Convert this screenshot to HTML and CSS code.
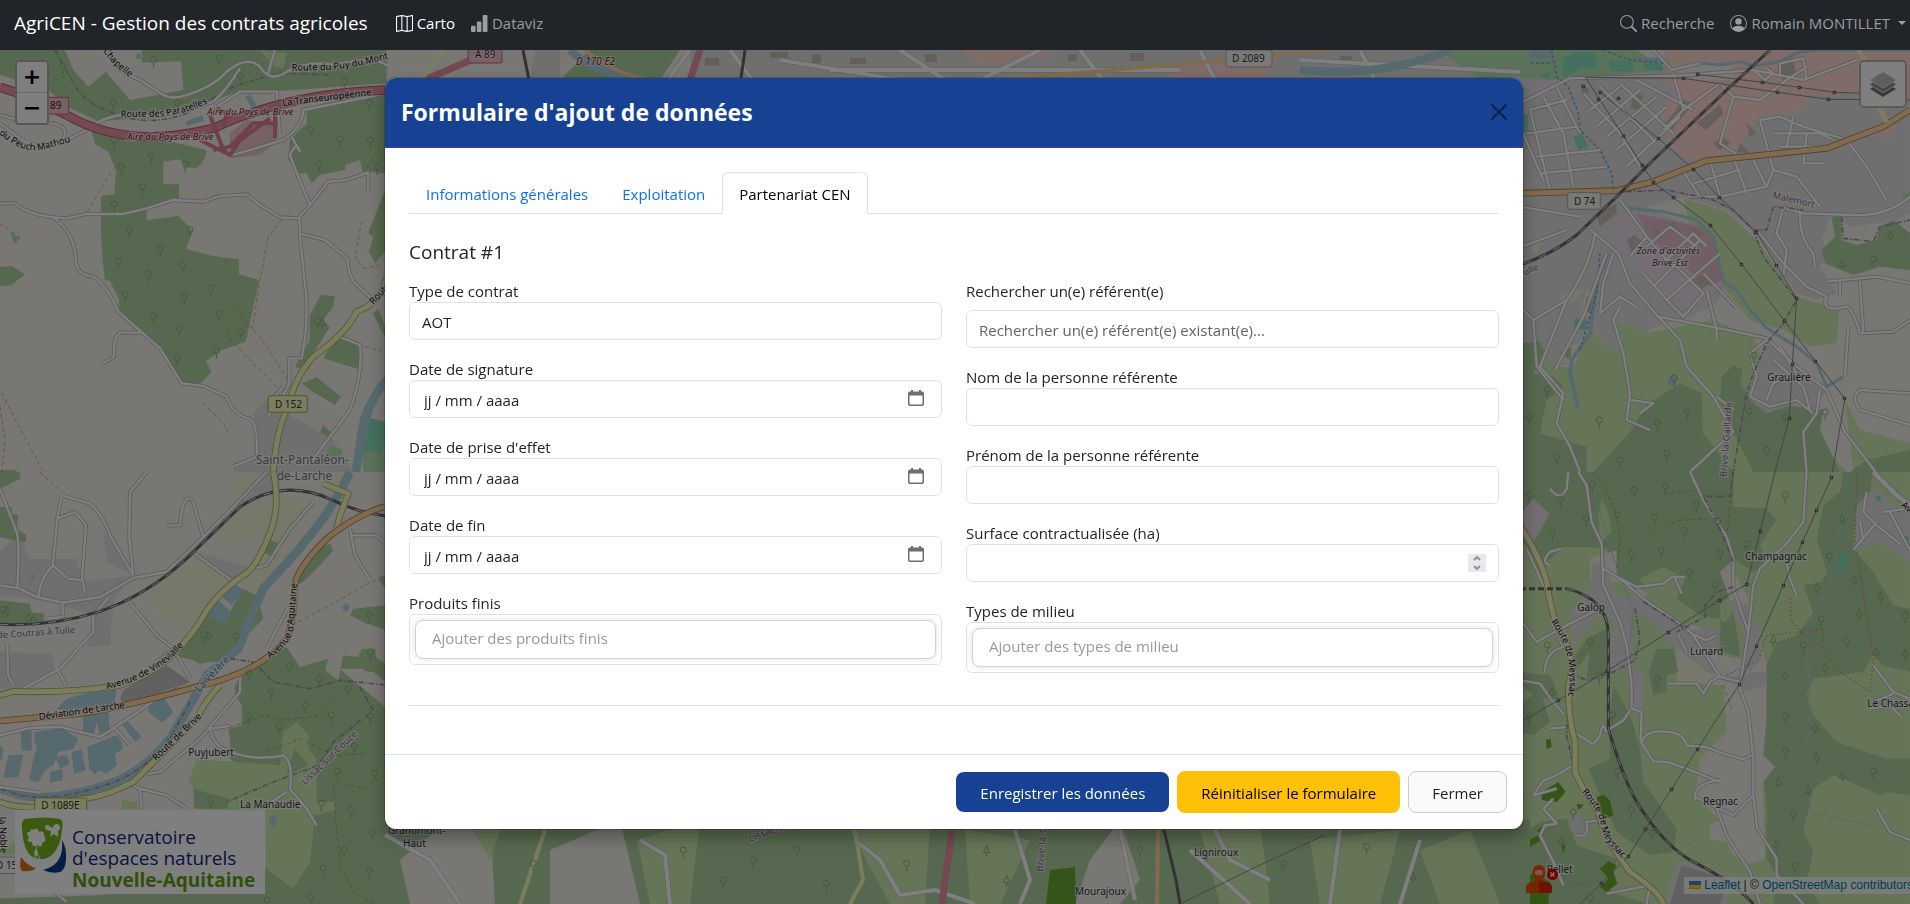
FILE: index.html
```html
<!DOCTYPE html>
<html lang="fr">
<head>
<meta charset="utf-8">
<meta name="viewport" content="width=device-width, initial-scale=1">
<title>AgriCEN - Gestion des contrats agricoles</title>
<link rel="stylesheet" href="styles.css">
</head>
<body>
<nav class="navbar">
  <a class="brand" href="#">AgriCEN - Gestion des contrats agricoles</a>
  <a class="nav-link active" href="#">
    <svg class="icon" viewBox="0 0 16 16" fill="currentColor" aria-hidden="true"><path fill-rule="evenodd" d="M15.817.113A.5.5 0 0 1 16 .5v14a.5.5 0 0 1-.402.49l-5 1a.502.502 0 0 1-.196 0L5.500 15.010l-4.902.98A.5.5 0 0 1 0 15.500v-14a.5.5 0 0 1 .402-.49l5-1a.5.5 0 0 1 .196 0L10.500.990l4.902-.98a.5.5 0 0 1 .415.103zM10 1.910l-4-.8v12.980l4 .8V1.910zm1 12.980 4-.8V1.110l-4 .8v12.980zm-6-.8V1.110l-4 .8v12.980l4-.8z"/></svg>
    Carto</a>
  <a class="nav-link" href="#">
    <svg class="icon" viewBox="0 0 16 16" fill="currentColor" aria-hidden="true"><rect y="10" width="4.300" height="6" rx="1"/><rect x="5.500" y="6" width="4.300" height="10" rx="1"/><rect x="11" y="0" width="4.500" height="16" rx="1"/></svg>
    Dataviz</a>
  <span class="spacer"></span>
  <a class="nav-link" href="#">
    <svg class="icon" viewBox="0 0 16 16" fill="none" stroke="currentColor" aria-hidden="true"><circle cx="6.500" cy="6.500" r="6"/><path d="M11.200 11.200l4 4" stroke-width="1.800" stroke-linecap="round"/></svg>
    Recherche</a>
  <a class="nav-link user" href="#">
    <svg class="icon" viewBox="0 0 16 16" fill="currentColor" aria-hidden="true"><path d="M11 6a3 3 0 1 1-6 0 3 3 0 0 1 6 0z"/><path fill-rule="evenodd" d="M0 8a8 8 0 1 1 16 0A8 8 0 0 1 0 8zm8-7a7 7 0 0 0-5.468 11.370C3.242 11.226 4.805 10 8 10s4.757 1.225 5.468 2.370A7 7 0 0 0 8 1z"/></svg>
    Romain MONTILLET<span class="caret"></span></a>
</nav>

<main class="map">
  <svg class="tiles" viewBox="0 0 1910 854" preserveAspectRatio="xMidYMid slice" aria-hidden="true">
    <defs>
      <g id="leaf"><circle r="9"/><path d="M0 9v16"/></g>
      <g id="pine"><path d="M0-14l-9 22h18zM0 8v12"/></g>
      <g id="nw-roads">
        <path d="M325 40Q350 95 420 120L490 165Q520 180 560 165Q640 140 680 95Q740 45 780 80Q810 130 860 95Q930 60 1010 75Q1130 40 1180 90M720 85Q680 150 640 185L560 210Q440 240 360 225Q300 235 270 265L180 310Q110 330 60 295L0 250"/>
        <path class="thin" d="M0 490H45Q90 530 200 535L260 522H370L440 505L520 480L610 485L660 468L740 463L780 495L840 532L895 535L930 495L985 425L1040 420L1105 397V455M160 532Q225 580 227 660Q230 705 280 710Q320 735 355 815L480 925L545 1030L610 1038L680 1070Q700 1125 745 1135Q775 1140 770 1250L700 1280M420 878H360Q340 890 342 950L310 970M930 495Q890 400 870 345Q890 300 900 335L875 290M898 535L902 610L918 760Q925 860 905 955H868V1030L848 1070M902 582L975 600L1042 655Q1045 710 1070 735L1120 780M1018 890L1080 915Q1090 1000 1050 1110L930 1270M808 1130V1090L850 1040M0 225Q80 250 150 250Q210 255 190 300M700 345L850 300Q910 260 910 210L1160 160M650 200L720 155L830 155L840 280M805 100Q815 60 825 30"/>
      </g>
      <g id="sw-roads">
        <path class="thin" d="M0 50L50 180Q60 220 52 345M185 70L172 140L158 280Q120 320 115 375M185 70L270 95Q310 130 330 190L400 310M172 140L225 120L258 160L246 320L255 360M158 280L205 320L250 325M0 340L60 350L110 375L190 392L300 375L400 318L500 300L610 195L700 105L800 0M385 385L470 490L520 530L570 620M325 378L280 430L280 480L180 590L70 650M188 395V435L140 440M440 0L390 60L388 200L400 310M585 245L695 325L760 290L800 280L870 170L940 90M610 195L580 90Q550 50 540 160L500 160M420 910L480 900L600 800L720 660V600M630 770Q640 820 680 835Q760 870 850 850Q880 870 870 950L920 1010L950 1060M630 770L690 762M0 790L90 768L180 765L300 795L400 730L470 680L560 640M390 935L420 950L425 1010M420 950L500 970L560 1010M800 530L870 395M1050 170L1065 250L1110 325M1050 190L1130 190L1170 230M100 1210L200 1290M22 520L24 610L40 640M170 590L198 640M860 960L800 1000M340 765L390 820M0 945L120 962"/>
      </g>
      <g id="ne-roads">
        <path d="M0 310L90 265L150 235L490 226L700 210L850 240L1010 180M400 150L455 210M455 210L540 190M212 690L295 760L330 850L415 950L600 985L740 1015L830 1100L920 1170L975 1296L1070 1420"/>
        <path class="thin" d="M0 620L180 650M5 740L140 690M0 380L70 540M30 330L90 570M70 290L130 400L160 560M110 260L180 400M30 330L140 300M20 400L170 380M50 470L240 450M60 520L260 500M190 280L300 400L360 500M240 260L400 420M300 250L460 400M350 240L520 330M210 330L300 260M230 380L360 270M260 410L410 290M290 450L440 320M320 500L480 350M460 220L490 330L430 390M490 330L600 250L640 290L720 300L800 240L860 200M640 290L600 430L660 470M700 210L735 240L760 220L740 205M780 230V190L850 175L860 240M720 360L780 350L850 380L980 420L1040 500L1100 600M720 360L760 510L740 560L600 590L500 590M760 400L900 400L940 420M820 350L800 440M860 400L850 490H910M780 440L930 440M760 510L830 530L900 620M480 500L540 590M570 480L600 590M640 470L680 580M520 550L660 510M700 480L740 560M710 690L790 790L860 860L920 890Q900 940 980 920Q1000 930 1020 1000L1120 995L1170 960M790 620L770 700L800 750L790 830M840 640Q840 720 880 760L885 800M1170 850L1070 830L920 845M960 845V890M1020 845L1030 1000M985 980L975 1130M1170 1180L1020 1170Q990 1190 1020 1230L1170 1275M740 1020L690 1060L710 1130L690 1190L750 1220L830 1200L880 1240M760 1080L850 1160L870 1230M780 1040L830 1120L760 1150L740 1200M900 1170L890 1240L850 1296L860 1420M415 950L480 1020L500 1100L580 1190L640 1296L510 1416M590 1190L640 1230M300 920L280 960L310 1060L330 1180L320 1260L390 1290M330 1200L400 1210L360 1240M225 700Q210 800 140 900L40 960M140 900L60 1100L130 1180L110 1270L150 1340L180 1416M280 760L250 850L240 940L300 890L350 920M370 820L440 900L490 950L550 880L450 780M330 770L380 710L330 640L300 600M380 710L440 780L520 700L560 740M400 860L540 720M440 900L600 760M380 740L450 680L530 740M550 820L650 925M780 620L850 640L1000 645Q1100 650 1170 590M0 920L40 960L50 1100L130 1200M260 760L190 950L105 1110M560 870L590 990V1020"/>
      </g>
      <g id="se-roads">
        <path class="thin" d="M175 0L200 40L215 150L245 215L250 340L300 450L320 520L335 640L335 710L365 720L362 810L400 868L440 870L500 890L600 930M510 0L550 85L620 195L640 260V350L685 480L665 610L660 650L685 720L700 860V970L712 1070L770 1160V1210L850 1296M860 0L850 150L800 215L720 290L700 340L685 480M365 810Q380 770 440 780Q490 780 500 820L560 825L610 845L670 862L695 850M250 290L300 320L350 345L430 335L455 315L495 315M465 318L485 365M300 320L370 380L500 470L520 490L600 615L660 630M445 635L530 635L550 665L570 630L600 612M475 490L500 540M515 485L560 505L590 490M800 270L810 320L830 370M0 625L60 635L100 690L130 725M90 770L145 765M330 715L310 745L270 770L258 780Q250 740 240 790Q215 830 210 810L160 780M0 440L50 510L130 465L240 410M75 600Q75 540 130 525L90 440M75 350L20 230M90 280Q60 270 90 240L125 230M160 880L100 915L70 925L40 970L110 950M100 980L70 1010L110 1055L75 1060L60 1090L100 1170L130 1240M600 925Q520 930 525 985M590 1010L620 1090L690 1200L720 1296M525 975L640 1030L700 970M1060 580L1120 660L1170 680M1050 710L1110 700L1145 735M1120 665L1060 690M1070 1010L1110 1080L1170 1105M1040 60L1030 120L1070 160L1140 215M1090 120L1160 110M1110 120L1170 235M1070 150L1000 235M1020 150L1030 200M170 1090Q210 1100 200 1050L240 1045L260 1090M90 50Q120 90 140 50L145 0M260 1265L390 1240L380 1296"/>
      </g>
      <path id="lbl-chapelle" d="M290 0Q335 90 430 132"/>
      <path id="lbl-mont" d="M875 92L985 90Q1080 82 1180 50"/>
      <path id="lbl-paratelles" d="M362 232L470 230Q560 225 640 180"/>
      <path id="lbl-mathou" d="M-20 265Q60 345 130 328L230 300"/>
      <path id="lbl-vinevialle" d="M320 652Q470 620 560 510"/>
      <path id="lbl-aquitaine" d="M810 560Q875 510 880 470L893 320"/>
      <path id="lbl-meyssac" d="M92 450Q165 540 145 670"/>
      <path id="lbl-meyssac2" d="M185 960Q240 1020 245 1070Q260 1120 330 1180"/>
    </defs>

    <rect class="land" width="1910" height="854"/>

    <!-- north-west -->
    <g transform="translate(0 -10) scale(.3333)">
      <path class="wood" d="M0 30H195L220 90L265 140L318 95L390 180L550 150L543 64L425 68V30H1160V140L920 205V250L870 300L865 360L900 400H920L935 430L960 405L1035 390L1160 400V130L880 150L700 160L560 215L400 235L300 245L200 200L145 150L0 105z"/>
      <path class="wood" d="M275 275L360 270L620 330Q620 360 590 385L555 380L540 358L490 365V433H537V475L510 480L440 508V540L535 528L578 572L557 627L640 648L717 658V702L778 720L737 905L665 930L618 963L635 997L600 1032L545 1030L480 925L357 815V780L330 722L315 720Q300 620 303 468L343 463L348 390L325 335L285 313z"/>
      <path class="wood" d="M0 680L35 678L75 703L35 735L0 738zM962 765L1005 768L1000 800L970 840L990 860L940 940L900 985L885 980L930 900L928 830zM1020 890L1075 915L1083 990L970 955L985 930zM905 1030L950 1012L1023 1070L1005 1095L930 1050zM1155 450L1105 578L1120 590L1107 635L1125 670L1160 630zM1118 820L1135 808L1160 870V900zM970 1155L992 1175L960 1235L938 1222zM0 1290H50V1296H0z"/>
      <path class="field" d="M1035 375L1080 360L1088 395L1038 395z"/>
      <path class="grass" d="M780 30L860 40L850 85L825 80z"/>
      <path class="town" d="M700 1296V1270L770 1250L760 1120L830 1050L860 1120L1000 1200L1060 1296z"/>
      <path class="sport" d="M1085 1130L1155 1150V1296H1090zM990 1215L1030 1230L1015 1255L975 1245z"/>
      <path class="pitch" d="M1110 1135L1155 1145V1205L1100 1200zM1095 1200L1150 1210L1145 1240L1090 1230z"/>
      <path class="water" d="M405 45L418 38L425 57L408 55zM555 245L608 225L612 242L562 258zM735 168L750 163L770 195L755 205zM30 576L60 595L42 613zM1160 1000Q1090 1080 1075 1160L1055 1296H1080L1105 1160Q1120 1090 1160 1040z"/>
      <path class="service" d="M690 280L740 240L830 250L825 310L780 345L690 355z"/>
      <path class="rail-dash" d="M165 30L215 120Q250 190 330 215Q440 265 560 220L700 140L830 100L1000 105"/>
      <path class="track" d="M140 125L200 110M360 365L330 400L260 520M845 540L805 590L780 720L757 870M690 795L780 890L870 1030M685 875L690 900L830 1040M1085 545L1065 650L1090 685L1140 675M1140 320L1095 395M1075 915L1155 935M5 1060L130 1296M0 1100L15 1200L5 1296M610 1090L670 1150L690 1190M0 550L70 600"/>
      <use href="#nw-roads" class="casing"/><use href="#nw-roads" class="street"/>
      <path class="sec-case" d="M1160 715Q1140 790 1070 815Q1040 880 940 950Q880 1020 870 1090Q830 1160 820 1296"/><path class="sec" d="M1160 715Q1140 790 1070 815Q1040 880 940 950Q880 1020 870 1090Q830 1160 820 1296"/>
      <path class="mot-case" d="M0 142Q80 165 200 225Q380 330 640 265Q860 160 1160 150"/><path class="mot" d="M0 142Q80 165 200 225Q380 330 640 265Q860 160 1160 150"/>
      <path class="ramp" d="M600 300L690 345M630 225L670 330L690 345L720 300L810 235M650 205L680 220L670 260M825 215V295M640 330L690 320L720 290L760 250L820 250"/>
      <rect class="shield mot-sh" x="95" y="172" width="111" height="50" rx="5"/><text x="150" y="208" class="sh-mot">89</text>
      <rect class="shield sec-sh" x="805" y="1067" width="117" height="50" rx="5"/><text x="825" y="1103" class="sh-sec">D 152</text>
      <g class="trees"><use href="#leaf" x="188" y="78"/><use href="#leaf" x="461" y="58"/><use href="#leaf" x="658" y="54"/><use href="#leaf" x="721" y="107"/><use href="#leaf" x="340" y="188"/><use href="#leaf" x="532" y="188"/><use href="#leaf" x="343" y="300"/><use href="#leaf" x="454" y="345"/><use href="#leaf" x="364" y="381"/><use href="#leaf" x="556" y="373"/><use href="#leaf" x="427" y="440"/><use href="#leaf" x="343" y="492"/><use href="#leaf" x="388" y="570"/><use href="#leaf" x="570" y="568"/><use href="#leaf" x="481" y="624"/><use href="#leaf" x="355" y="663"/><use href="#leaf" x="547" y="675"/><use href="#leaf" x="445" y="702"/><use href="#leaf" x="631" y="744"/><use href="#leaf" x="376" y="762"/><use href="#leaf" x="553" y="768"/><use href="#leaf" x="460" y="828"/><use href="#leaf" x="658" y="822"/><use href="#leaf" x="538" y="867"/><use href="#leaf" x="721" y="876"/><use href="#leaf" x="649" y="932"/><use href="#leaf" x="532" y="954"/><use href="#leaf" x="931" y="267"/><use href="#leaf" x="1021" y="297"/><use href="#leaf" x="1111" y="300"/><use href="#leaf" x="958" y="372"/><use href="#leaf" x="1132" y="380"/><use href="#leaf" x="1108" y="188"/><use href="#leaf" x="953" y="843"/><use href="#pine" x="967" y="846"/><use href="#leaf" x="1033" y="124"/></g>
      <g class="label road-l"><text><textPath href="#lbl-chapelle">La Chapelle</textPath></text><text><textPath href="#lbl-mont">Route du Puy du Mont</textPath></text><text><textPath href="#lbl-paratelles">Route des Paratelles</textPath></text><text><textPath href="#lbl-mathou">e du Peuch Mathou</textPath></text><text transform="translate(848 198) rotate(-7)">La Transeuropéenne</text><text transform="translate(1120 795) rotate(-48)">Route</text></g>
      <g class="label red"><text x="622" y="226">Aire du Pays de Brive</text><text x="382" y="300">Aire du Pays de Brive</text></g>
      <text class="label town-l" x="768" y="1272">Saint-Pantaléon-</text>
    </g>

    <!-- south-west -->
    <g transform="translate(0 422) scale(.3333)">
      <path class="town" d="M0 240L60 180L85 260L230 260L250 330L400 310L340 385L330 520L260 525L280 430L150 390L0 370zM310 190L345 190L350 230L395 290L400 310L320 270zM0 540L155 545L165 590L70 650L0 650zM590 240L760 290L690 330L640 290zM770 0H860L830 50L700 110z"/>
      <path class="farm" d="M440 365L585 245L690 330L600 450L560 470L480 430zM640 180L700 120L820 80L930 85L860 210L780 370L735 350L780 270L790 180L700 215zM700 20L800 0L740 80L700 70z"/>
      <path class="wood" d="M0 0H60V20L0 50zM0 105H35V125L55 130L50 170L78 188V210L40 205L0 195zM0 385L90 395L95 420L132 425V450L0 455zM730 350L770 370L790 440L730 500L700 560L600 575L580 565L500 545L450 575L530 520L600 450L620 410L680 440L700 400zM800 200L840 215L825 255L785 240zM880 350L900 310L960 225L990 215L1000 235L960 280L920 320zM1135 320L1170 300V370zM1155 400L1170 395V500L1150 470L1100 455L1050 430L1060 410z"/>
      <path class="wood" d="M860 525L900 585L985 560L975 595L1015 625L1030 550L1075 555L1085 530L1125 530L1130 560L1170 580V640L1120 600L1020 590L1060 620L1155 700L1170 700V1296H0V1280L300 1270L795 1200L800 1170L860 1160L840 980L690 860V800L685 770L725 760V700L705 665V640L730 610L770 575z"/>
      <path class="grass" d="M590 862L700 870L840 880L850 780L890 750L925 790V830L950 860V990L1005 990V1015L945 1030L930 1170L880 1250L800 1190L795 1010L700 1020L580 1005V950L565 930zM365 985L410 990L415 1012H365zM0 1130L45 1110V1150H0z"/>
      <path class="wood" d="M860 900L885 830L925 880L870 905zM580 950L690 980L680 1010H585z"/>
      <path class="field" d="M1020 590L1090 590L1155 690V705L1060 625z"/>
      <path class="indus" d="M370 655L500 580L570 630L470 665L370 690L360 680z"/>
      <path class="water" d="M662 370L705 335L730 355L695 400zM625 410L655 385L695 420L680 455L630 435zM168 712L200 680L270 660L350 648L345 690L360 720L310 700L200 715zM62 780L95 775V838L65 835zM105 780L185 768L235 800L220 830L175 840L160 880L135 895L115 930L88 925L100 860L112 820L103 815zM25 850L70 848L55 915L10 918zM165 855L200 850L210 875L180 890zM150 900L188 890V925L150 932zM215 840L245 832L257 895L222 905zM262 825L335 795Q360 780 370 830L345 845L350 880L320 905L295 895L285 908L268 890zM250 735L325 710L330 790L300 790L290 750L280 790L248 780zM445 700L490 675L520 720L488 752L445 720zM365 755L385 750L425 795L405 810zM805 1040L820 1028L833 1045L820 1068zM92 312L100 305L105 315L97 322zM1030 400L1040 392L1050 405L1040 420L1028 412zM0 820Q15 830 5 865H0z"/>
      <path class="river" d="M1050 0L1020 60L970 140L890 240L790 350L760 420L715 530L620 610L570 700L510 800Q430 900 330 935Q170 990 60 970L0 950"/>
      <path class="boundary" d="M570 690L510 800Q430 900 330 935Q170 990 60 970L0 950M690 560L760 570L820 630L930 650L1020 625L1170 640M1080 645L1120 715L1000 810L955 880L820 930L680 990"/>
      <path class="track" d="M120 0L185 60M0 90M860 470L1170 300M740 750L790 730L850 745L960 730L1010 680M800 840L900 800L1000 850L1100 845M1010 930L1090 950L1170 900M1000 930Q1010 1080 1020 1180L1060 1260L1120 1296M690 765L740 750"/>
      <use href="#sw-roads" class="casing"/><use href="#sw-roads" class="street"/>
      <path class="rail" d="M0 457Q150 465 300 418Q440 370 560 260L720 105Q850 15 1000 85Q1080 125 1170 133"/><path class="rail-in" d="M0 457Q150 465 300 418Q440 370 560 260L720 105Q850 15 1000 85Q1080 125 1170 133"/>
      <path class="sec-case" d="M820 0Q840 100 815 170Q770 290 730 310Q640 370 600 450Q500 600 360 640Q200 665 40 658L0 670M660 640Q620 680 590 740L450 880L400 930Q300 980 240 980L120 1005Q50 1010 0 990M970 35L1045 65L1020 130L1010 170"/><path class="sec" d="M820 0Q840 100 815 170Q770 290 730 310Q640 370 600 450Q500 600 360 640Q200 665 40 658L0 670M660 640Q620 680 590 740L450 880L400 930Q300 980 240 980L120 1005Q50 1010 0 990M970 35L1045 65L1020 130L1010 170"/>
      <path class="pri-case" d="M1170 100Q1080 120 980 200Q890 290 885 340Q880 460 860 500Q800 580 660 625Q400 700 240 725L0 747"/><path class="pri" d="M1170 100Q1080 120 980 200Q890 290 885 340Q880 460 860 500Q800 580 660 625Q400 700 240 725L0 747"/>
      <rect class="shield sec-sh" x="104" y="978" width="156" height="50" rx="5"/><text x="124" y="1012" class="sh-sec">D 1089E</text>
      <rect class="shield" x="-40" y="1155" width="120" height="50" rx="5"/><text x="-12" y="1191" class="sh-plain">D 151</text>
      <g class="trees"><use href="#pine" x="22" y="416"/><use href="#leaf" x="8" y="412"/><use href="#pine" x="99" y="444"/><use href="#leaf" x="86" y="438"/><use href="#leaf" x="610" y="488"/><use href="#pine" x="625" y="490"/><use href="#leaf" x="708" y="492"/><use href="#leaf" x="1108" y="429"/><use href="#leaf" x="1111" y="540"/><use href="#leaf" x="868" y="582"/><use href="#leaf" x="748" y="603"/><use href="#leaf" x="958" y="620"/><use href="#leaf" x="814" y="657"/><use href="#leaf" x="1045" y="651"/><use href="#leaf" x="916" y="699"/><use href="#leaf" x="994" y="729"/><use href="#leaf" x="1111" y="732"/><use href="#leaf" x="748" y="732"/><use href="#leaf" x="838" y="762"/><use href="#leaf" x="1063" y="822"/><use href="#leaf" x="1012" y="897"/><use href="#leaf" x="1123" y="903"/><use href="#leaf" x="631" y="984"/><use href="#leaf" x="964" y="993"/><use href="#leaf" x="1054" y="1014"/><use href="#leaf" x="1117" y="1082"/><use href="#leaf" x="1033" y="1134"/><use href="#leaf" x="970" y="1188"/><use href="#leaf" x="1108" y="1197"/><use href="#leaf" x="931" y="1275"/><use href="#leaf" x="802" y="1284"/></g>
      <text class="label town-l" x="830" y="24">de-Larche</text>
      <g class="label road-l"><text><textPath href="#lbl-vinevialle">Avenue de Vinevialle</textPath></text><text><textPath href="#lbl-aquitaine">Avenue d'Aquitaine</textPath></text><text transform="translate(118 744) rotate(-8)">Déviation de Larche</text><text transform="translate(468 868) rotate(-44)">Route de Brive</text><text transform="translate(-2 1035) rotate(88)">la Noble</text></g>
      <g class="label place"><text x="565" y="852">Puyjubert</text><text x="720" y="1007">La Manaudie</text></g>
      <text class="label grey-l" transform="translate(-8 499) rotate(-4)">de Coutras à Tulle</text>
      <text class="label river-l" transform="translate(598 662) rotate(-47)">La Vézère</text>
      <text class="label purple" transform="translate(915 940) rotate(-44)">Lissac-sur-Couze</text>
    </g>

    <!-- north-east -->
    <g transform="translate(1520 -50) scale(.3333)">
      <path class="grass" d="M0 1290H870L980 1416H0zM975 1200L1020 1290L1170 1330V1416H1000z"/>
      <path class="town" d="M0 150H1170V640L1130 660L1000 680L930 650L905 720L930 760L900 800L950 880L890 900L830 880L710 700L620 630L490 590L380 620L560 700L620 850L590 910L510 950L400 980L330 1050L290 1080L220 980L190 1000L160 1090L110 1100L0 1030z"/>
      <path class="grass" d="M490 595L620 635L710 720L780 820L830 890L900 910L955 930V1030L870 1040L790 990L690 960L600 850L575 720L510 680zM280 960L380 1000L580 960L700 1010L720 1060L700 1130L690 1190L800 1296H0V1030L110 1100L160 1100L215 980L260 1040L300 1060z"/>
      <path class="wood" d="M0 1030L60 1025L75 1060L40 1120L100 1130L130 1160L80 1200L60 1300L200 1340V1416H0zM935 650H965V720L1010 735L1070 720L1080 680L1120 660L1170 700V810L1080 800L1000 825L915 790L905 750L945 710zM380 1215L480 1150L545 1180L550 1300L640 1416H220L330 1296zM605 1130L640 1095L670 1110L660 1150L700 1210L800 1215L910 1230L900 1290L960 1416H700L640 1296L600 1200z"/>
      <path class="wood" d="M1040 1380L1170 1350V1416H990z"/>
      <path class="town" d="M760 1030L850 1110L920 1170L880 1240L830 1210L740 1240L690 1200L710 1100L730 1040z"/>
      <path class="retail" d="M430 150H1170V300L1080 280L870 290L850 330L720 350L640 460L530 480L500 480L440 420L420 340L470 270L410 220L460 210zM1075 380L1130 360L1120 410L1085 415z"/>
      <path class="town" d="M870 290L980 300L1050 380L1040 440L930 440L720 460L700 360L850 330z"/>
      <path class="land" d="M160 150H430L440 200L640 190L640 240L530 240L440 200zM1000 900L1170 840V1175L1010 1180L980 1200L860 1060L950 1025L965 890zM1010 1190L1170 1190V1280L1040 1250z"/>
      <path class="sport" d="M0 150H350L440 210L380 215L120 240L0 235zM1150 580H1170V600H1150z"/>
      <path class="pitch" d="M130 175L190 150L215 190L130 235zM195 155L225 160L228 205L200 205zM270 180L340 185V215L268 212zM372 190L428 193V212L372 210zM160 410L185 400L205 440L175 450zM0 335L25 345V400H0zM358 675L385 643L413 660L380 695zM165 955L200 960L195 990L160 985zM62 222L90 215V235H62z"/>
      <path class="farm" d="M150 870L190 870L160 910L110 900zM200 870L230 880L225 950L180 950zM40 715L60 730L50 760L35 750zM130 1040L185 1030L165 1090L120 1085z"/>
      <path class="indus-z" d="M330 640L400 640L540 680L580 720L600 810L620 840L560 890L510 940L400 870L340 780L260 730L280 650zM30 250L110 240L100 275L30 300z"/>
      <path class="zone-red" d="M350 640L540 680L580 720L610 840L570 860L480 790L420 740L380 700z"/>
      <path class="bldg" d="M490 300L520 310L480 360L455 390L430 380zM530 370L600 315L610 340L560 390zM780 200L820 180L830 230L790 245zM340 280L370 285L360 330L330 325zM660 430L690 460L650 455zM320 720L345 705L370 730L340 765zM230 640L290 610L290 640L240 680zM510 680L550 700L530 720zM680 370L710 400L690 410zM180 250L210 270L190 290zM200 890L220 900L210 940L195 930zM140 1040L155 1045L150 1080L135 1070zM400 680L420 700L395 710zM520 840L550 820L570 850L540 870zM580 430L610 410L630 430L600 450zM440 680L460 665L480 690L465 700z"/>
      <path class="water" d="M0 150H100V175H0zM440 1140L460 1120L475 1135L460 1160L445 1155zM340 170L430 175L415 192L350 180z"/>
      <path class="stream" d="M540 190L600 195L660 185L700 198L780 185L840 155L900 150H1170M330 625L430 635L530 660L580 710L600 800L615 850L650 870L690 930L740 985L830 1040L890 1090L920 1160L970 1130"/>
      <path class="river-n" d="M265 760L230 850L210 1000L155 1080L150 1120L175 1225"/>
      <path class="stream-dash" d="M240 760L230 880L180 1050M95 150L110 230L145 260L175 340L180 390L240 450L275 520L280 570M0 190H90M250 150L330 180L430 190"/>
      <use href="#ne-roads" class="casing"/><use href="#ne-roads" class="street"/>
      <path class="boundary" d="M320 575L440 570L580 600L640 630L700 690L740 690L760 620L850 630M700 690L730 770L830 900L790 970L740 1030L700 1120L680 1180L660 1296L640 1416M965 650L970 715L1060 725L1080 680L1170 660"/>
      <path class="power" d="M195 230L310 408L400 547L570 676L665 793L793 962L887 1084L975 1196L935 1430M240 277L415 415L520 508L598 592L710 697L770 797L830 895L817 1094L808 1255L765 1416M200 232L490 235L772 277L925 298L1170 300M532 223L727 247L838 262L943 277L1030 280"/>
      <path class="pri-case" d="M0 580L290 572L400 545L560 482L780 460L920 445L1090 380L1170 330"/><path class="pri" d="M0 580L290 572L400 545L560 482L780 460L920 445L1090 380L1170 330"/>
      <path class="sec" d="M1015 150L1040 190M1075 320L1100 365"/>
      <path class="rail" d="M750 150L620 270L400 480L290 590L170 705Q100 760 0 795"/><path class="rail-in" d="M750 150L620 270L400 480L290 590L170 705Q100 760 0 795"/>
      <g class="pylon"><rect x="307" y="405" width="7" height="7"/><rect x="397" y="544" width="7" height="7"/><rect x="568" y="673" width="7" height="7"/><rect x="661" y="790" width="7" height="7"/><rect x="790" y="959" width="7" height="7"/><rect x="883" y="1081" width="7" height="7"/><rect x="970" y="1192" width="7" height="7"/><rect x="412" y="412" width="7" height="7"/><rect x="517" y="505" width="7" height="7"/><rect x="595" y="589" width="7" height="7"/><rect x="706" y="694" width="7" height="7"/><rect x="766" y="793" width="7" height="7"/><rect x="826" y="892" width="7" height="7"/><rect x="814" y="1090" width="7" height="7"/><rect x="805" y="1252" width="7" height="7"/><rect x="487" y="232" width="7" height="7"/><rect x="769" y="274" width="7" height="7"/><rect x="922" y="295" width="7" height="7"/><rect x="529" y="220" width="7" height="7"/><rect x="724" y="244" width="7" height="7"/><rect x="835" y="259" width="7" height="7"/><rect x="940" y="274" width="7" height="7"/><rect x="187" y="256" width="7" height="7"/><rect x="232" y="295" width="7" height="7"/><rect x="292" y="292" width="7" height="7"/><rect x="238" y="274" width="7" height="7"/><rect x="364" y="493" width="7" height="7"/><rect x="457" y="589" width="7" height="7"/></g>
      <rect class="shield" x="143" y="578" width="98" height="50" rx="5"/><text x="162" y="615" class="sh-plain">D 74</text>
      <g class="trees"><use href="#pine" x="1111" y="706"/><use href="#pine" x="967" y="790"/><use href="#leaf" x="1060" y="777"/><use href="#leaf" x="502" y="1233"/><use href="#leaf" x="463" y="1134"/><use href="#leaf" x="688" y="1233"/><use href="#leaf" x="796" y="1251"/><use href="#leaf" x="238" y="1260"/><use href="#leaf" x="412" y="1269"/><use href="#leaf" x="82" y="1167"/><use href="#leaf" x="28" y="1250"/><use href="#leaf" x="700" y="1066"/><use href="#leaf" x="916" y="1236"/><use href="#leaf" x="110" y="1370"/><use href="#leaf" x="300" y="1380"/><use href="#leaf" x="440" y="1360"/><use href="#leaf" x="740" y="1350"/></g>
      <g class="label zone-l"><text x="350" y="762">Zone d'activités</text><text x="396" y="798">Brive-Est</text></g>
      <text class="label place" x="742" y="1143">Graulière</text>
      <text class="label purple" transform="translate(756 594) rotate(13)">Malemort</text>
      <text class="label grey-l" transform="translate(-20 842) rotate(-24)">à Tulle</text>
    </g>

    <!-- south-east -->
    <g transform="translate(1520 422) scale(.3333)">
      <path class="grass" d="M0 0H1170V1296H0z"/>
      <path class="wood" d="M0 0H640V105L740 108L768 145L720 220L740 270L700 300L640 260L600 300L640 360L600 400L605 540L660 555L650 480L600 440L540 430L470 380L495 320L430 285L360 320L380 370L290 310L260 230L215 225L130 225L70 280L30 240L0 200z"/>
      <path class="land" d="M210 260L290 235V310L380 360L370 420L470 450L560 470L590 550L660 560L690 520L650 440L600 300L630 275L685 380L710 470L740 580V740L730 850L765 885L730 930V995L735 1160L690 1175L640 1150L620 1110L570 1100V1060L600 1045L525 970L540 860L620 780L610 640L500 630L470 600V520L430 450L300 330L210 320z"/>
      <path class="town" d="M215 275L255 280L290 370L370 380L470 440L500 480L595 460V510L560 540L600 620L700 600L740 600L735 640L680 660L640 620L560 600L450 510L390 440L330 430L345 570L270 610L260 480L300 460L240 420L190 490L160 530L150 420L215 350zM620 380L690 400L720 470L725 560L690 600L660 570L680 500zM470 1165L600 1200L640 1230L620 1296H440zM1030 60L1080 55L1120 100L1170 130V270L1080 210L1010 230L1005 130zM320 570L370 600L365 720L335 710zM140 1060L180 1020L205 1090L190 1100z"/>
      <path class="indus" d="M485 1180L600 1215L620 1240L600 1296H450z"/>
      <path class="farm" d="M470 590L530 570L560 600L540 630H470z"/>
      <path class="wood" d="M740 580L770 510L830 490L880 420L850 340L905 330L920 300L890 200L910 100L960 60L970 0H1060L1050 60L1010 100L1000 230L1060 300L1120 400L1170 410V600L1090 580L1060 550L1030 600L880 620L860 670L880 730L950 810L1100 860L1170 860V970L1100 960L1080 970L990 930L940 910L880 950L850 1080L880 1140L860 1230L900 1296H760L770 1210L740 1160V1000L730 930L765 885L730 850L740 740z"/>
      <path class="wood" d="M200 500L260 470V600L200 620L210 540L170 590L140 620L160 560zM280 640L330 730L360 830L370 930L420 1000L470 1070L460 1140L390 1150L290 1080L205 890L270 860L265 760zM0 700L60 650L90 750L40 790L0 780zM0 600L90 610L120 680L60 680L0 640zM60 1050L140 1040L170 1120L290 1160L270 1260L380 1296H0V1090zM385 600L410 530L460 530L475 600L440 610V660L400 670zM600 470L640 420L660 540H600z"/>
      <path class="grass" d="M245 80L265 120L275 180L240 215L235 130z"/>
      <path class="indus-z" d="M10 115L40 80L88 125L45 205L10 195zM340 600H362L365 715L340 700z"/>
      <path class="parcel" d="M65 960L115 930L137 960L110 990L65 985zM230 975L250 968L270 985L280 1030L245 1045zM240 1190L265 1168L290 1180L280 1200L292 1235L260 1260L240 1245L265 1220zM0 1060L25 1045L20 1070L0 1085zM15 1110L55 1090L70 1100L30 1125zM50 1075L70 1060L65 1090zM78 805L92 800L95 825L80 832zM170 995L192 998L175 1015zM125 1120L137 1118L130 1145zM0 1240L40 1200L90 1230L85 1296H0z"/>
      <path class="pitch" d="M945 295L960 240L985 240L970 300zM1065 75L1080 70L1085 85L1070 88zM1145 195L1165 192V205H1147z"/>
      <path class="stream-thin" d="M985 0L970 120L930 330L860 480L870 760L850 880L870 1020L1050 1060M200 0L240 120L270 230L340 420L330 520M465 1085L600 1180M0 1090L25 1130L30 1200"/>
      <path class="track" d="M220 0Q300 100 300 220L290 290M380 155L400 175L480 145L560 140M430 65L530 55M610 640L635 710M640 0L620 200M0 1190L100 1190"/>
      <path class="path-red" d="M720 550L740 490L840 480L900 520L960 600L1050 660M1010 0L1005 200L1060 560L1050 660M810 380L815 450L845 480M840 480L910 470L905 530M600 620L700 570M150 1240L240 1230"/>
      <use href="#se-roads" class="casing"/><use href="#se-roads" class="street"/>
      <path class="casing2" d="M1060 0L1130 70L1170 100"/><path class="street2" d="M1060 0L1130 70L1170 100"/>
      <path class="boundary" d="M640 0L630 73H550L600 170L640 270M640 345L590 360L555 400V435L470 480M345 410L360 500L345 565L280 600L200 625L155 605M370 390L500 470M145 660L140 790L160 880L190 940"/>
      <path class="power" d="M765 0L721 178L680 337L598 385L445 481L260 598L115 685L0 750M935 16L890 115L847 211L790 340L709 523L658 637L532 832L454 952L376 1072L325 1153L244 1234L180 1296"/>
      <g class="pylon"><rect x="718" y="175" width="7" height="7"/><rect x="677" y="334" width="7" height="7"/><rect x="595" y="382" width="7" height="7"/><rect x="442" y="478" width="7" height="7"/><rect x="257" y="595" width="7" height="7"/><rect x="112" y="682" width="7" height="7"/><rect x="931" y="13" width="7" height="7"/><rect x="886" y="112" width="7" height="7"/><rect x="844" y="208" width="7" height="7"/><rect x="787" y="337" width="7" height="7"/><rect x="706" y="520" width="7" height="7"/><rect x="655" y="634" width="7" height="7"/><rect x="529" y="829" width="7" height="7"/><rect x="451" y="949" width="7" height="7"/><rect x="373" y="1069" width="7" height="7"/><rect x="322" y="1150" width="7" height="7"/><rect x="241" y="1231" width="7" height="7"/></g>
      <path class="sec-case" d="M0 160Q80 290 85 360Q100 450 130 500Q170 560 145 640Q145 740 165 810V900Q190 960 230 1010Q260 1110 330 1200Q420 1260 430 1296"/><path class="sec" d="M0 160Q80 290 85 360Q100 450 130 500Q170 560 145 640Q145 740 165 810V900Q190 960 230 1010Q260 1110 330 1200Q420 1260 430 1296"/>
      <path class="rail tunnel" d="M0 350H140"/>
      <path class="rail" d="M140 350Q265 380 265 490V770Q310 920 350 990Q430 1120 520 1170Q640 1230 700 1296"/><path class="rail-in" d="M140 350Q265 380 265 490V770Q310 920 350 990Q430 1120 520 1170Q640 1230 700 1296"/>
      <g class="trees"><use href="#leaf" x="28" y="69"/><use href="#leaf" x="121" y="81"/><use href="#leaf" x="217" y="36"/><use href="#leaf" x="343" y="54"/><use href="#leaf" x="436" y="42"/><use href="#leaf" x="292" y="129"/><use href="#leaf" x="403" y="135"/><use href="#leaf" x="199" y="138"/><use href="#leaf" x="529" y="96"/><use href="#leaf" x="595" y="147"/><use href="#leaf" x="493" y="174"/><use href="#leaf" x="97" y="183"/><use href="#leaf" x="424" y="234"/><use href="#leaf" x="334" y="246"/><use href="#leaf" x="601" y="240"/><use href="#leaf" x="679" y="216"/><use href="#leaf" x="508" y="300"/><use href="#leaf" x="586" y="339"/><use href="#leaf" x="796" y="69"/><use href="#leaf" x="928" y="252"/><use href="#pine" x="967" y="140"/><use href="#pine" x="1003" y="324"/><use href="#pine" x="892" y="348"/><use href="#pine" x="1081" y="374"/><use href="#pine" x="1018" y="424"/><use href="#leaf" x="904" y="441"/><use href="#leaf" x="1156" y="430"/><use href="#pine" x="760" y="504"/><use href="#leaf" x="850" y="519"/><use href="#leaf" x="979" y="507"/><use href="#pine" x="1069" y="540"/><use href="#pine" x="1156" y="545"/><use href="#pine" x="916" y="588"/><use href="#pine" x="796" y="610"/><use href="#leaf" x="211" y="507"/><use href="#leaf" x="82" y="519"/><use href="#leaf" x="238" y="612"/><use href="#leaf" x="412" y="621"/><use href="#pine" x="96" y="660"/><use href="#leaf" x="796" y="732"/><use href="#pine" x="886" y="768"/><use href="#leaf" x="796" y="837"/><use href="#pine" x="889" y="856"/><use href="#leaf" x="28" y="732"/><use href="#leaf" x="277" y="729"/><use href="#leaf" x="292" y="897"/><use href="#pine" x="775" y="930"/><use href="#pine" x="967" y="910"/><use href="#leaf" x="1060" y="897"/><use href="#pine" x="865" y="954"/><use href="#leaf" x="334" y="1014"/><use href="#leaf" x="820" y="1026"/><use href="#leaf" x="397" y="1083"/><use href="#pine" x="124" y="1106"/><use href="#pine" x="769" y="1118"/><use href="#leaf" x="826" y="1182"/><use href="#leaf" x="211" y="1278"/><use href="#leaf" x="160" y="1020"/></g>
      <g class="label place"><text x="675" y="263">Champagnac</text><text x="172" y="416">Galop</text><text x="510" y="550">Lunard</text><text x="550" y="1000">Regnac</text><text x="1042" y="706">Le Chassang</text><text x="80" y="1203">Pellet</text></g>
      <g class="label road-l"><text><textPath href="#lbl-meyssac">Route de Meyssac</textPath></text><text><textPath href="#lbl-meyssac2">Route de Meyssac</textPath></text><text transform="translate(1142 102) rotate(38)">Avenue</text></g>
      <text class="label purple" transform="translate(620 16) rotate(-86)">Brive-la-Gaillarde</text>
    </g>

    <!-- strip above the dialog -->
    <g>
      <path class="wood" d="M590 0H680L660 30H560z"/>
      <path class="land" d="M388 0H450V40H388z"/>
      <path class="town" d="M690 0H1520V40H690zM535 0H560V30H530z"/>
      <path class="sport" d="M1440 0H1530V25L1480 30z"/>
      <path class="retail" d="M960 0H1050V8L980 14zM1180 12L1280 5L1260 30H1170z"/>
      <path class="bldg" d="M705 8h14v8h-14zM770 2h18v6h-18zM812 4h9v9h-9zM850 8h16v6h-16zM925 4h12v8h-12zM1068 4h9v7h-9zM1130 3h14v8h-14zM1340 6h12v7h-12zM1400 12h15v7h-15z"/>
      <path class="casing2 s" d="M660 40L690 0M730 0L760 40M830 20H1180M900 0L960 40M1080 0L1110 40M1300 10L1520 22M1200 0L1220 40M1360 0L1380 40M780 10L900 30M980 30L1040 0"/><path class="street2 s" d="M660 40L690 0M730 0L760 40M830 20H1180M900 0L960 40M1080 0L1110 40M1300 10L1520 22M1200 0L1220 40M1360 0L1380 40M780 10L900 30M980 30L1040 0"/>
      <path class="river s" d="M570 0Q590 20 640 32M1300 20Q1380 28 1450 0"/>
      <path class="pri s" d="M585 0Q620 30 670 32M1180 14L1330 0M1180 14L1000 30"/>
      <path class="mot s" d="M420 32L480 6L500 0M700 0L690 30"/>
      <path class="sec s" d="M442 0L420 32"/>
      <path class="rail s" d="M523 0L530 35M745 0L740 35"/>
      <rect class="shield mot-sh s" x="468" y="-4" width="34" height="17" rx="2"/><text class="small sh-mot" x="475" y="8">A 89</text>
      <rect class="shield s" x="1226" y="0" width="46" height="17" rx="2"/><text class="small" x="1232" y="12">D 2089</text>
      <text class="small red" x="576" y="15">D 170 E2</text>
    </g>

    <!-- strip below the dialog -->
    <g>
      <path class="wood" d="M385 770H1530V854H385z"/>
      <path class="land" d="M400 810L450 770H490L495 854H410zM550 800L620 770L640 854H550zM870 800L905 820L895 840L880 830zM1090 810L1120 770L1140 830L1120 854H1075z"/>
      <path class="grass" d="M637 790L700 770L690 854H650zM850 780L930 775L925 854H890zM965 780L1030 790L1000 854H970zM1200 780L1260 770L1270 854H1220zM1310 790L1400 780L1380 854H1320zM470 775L500 780L490 810zM1420 800L1470 780L1500 854H1440z"/>
      <path class="parcel" d="M1050 820L1075 817L1076 854H1046z"/>
      <path class="casing2 s" d="M385 785L430 810L460 854M640 790L665 805L670 854M855 790L880 810L900 845L935 840L975 854M1015 780L1030 830L1020 854M1120 780L1135 850M1190 800L1250 854M1215 780L1230 810L1270 830M1340 780L1330 854M1420 790L1400 854"/><path class="street2 s" d="M385 785L430 810L460 854M640 790L665 805L670 854M855 790L880 810L900 845L935 840L975 854M1015 780L1030 830L1020 854M1120 780L1135 850M1190 800L1250 854M1215 780L1230 810L1270 830M1340 780L1330 854M1420 790L1400 854"/>
      <path class="sec s" d="M545 780L520 854M855 780L863 830L850 854"/>
      <path class="mot s" d="M952 780L942 854"/><path class="pri s" d="M1158 780L1157 854"/><path class="rail s" d="M1164 780L1176 830L1180 854"/>
      <path class="power" d="M1325 785L1260 815L1180 854"/>
      <g class="trees small-trees" transform="scale(.3333)"><use href="#leaf" x="1600" y="2440"/><use href="#leaf" x="2050" y="2400"/><use href="#leaf" x="2170" y="2490"/><use href="#leaf" x="2260" y="2430"/><use href="#leaf" x="2390" y="2400"/><use href="#leaf" x="2480" y="2500"/><use href="#leaf" x="2720" y="2440"/><use href="#pine" x="2960" y="2400"/><use href="#pine" x="3020" y="2490"/><use href="#leaf" x="3420" y="2400"/><use href="#leaf" x="3850" y="2440"/><use href="#leaf" x="4100" y="2390"/><use href="#pine" x="4240" y="2480"/></g>
      <g class="small"><text x="388" y="784">Grandmont-</text><text x="403" y="797">Haut</text><text x="1194" y="806">Ligniroux</text><text x="1075" y="845">Mourajoux</text></g>
      <text class="small violet" transform="translate(1043 822) rotate(-85)">Brive-la-G</text>
      <text class="small violet" transform="translate(750 792) rotate(-20)">Lissac-sur</text>
    </g>

    <!-- farmer marker -->
    <g class="marker" transform="translate(1526 815)">
      <path class="coat" d="M0 28V23Q0 18 6 17L10 15H16L20 17Q26 18 26 23V28z"/><path class="coat-shade" d="M13 28V17L20 17Q26 18 26 23V28z"/><path class="hair" d="M7 7Q7 0 13 0T19 7V11Q17 15 13 15T7 11z"/><path class="face" d="M9 6Q13 3 17 6V9Q13 12 9 9z"/>
      <circle class="badge" cx="26.500" cy="9.500" r="5.500"/><path class="cross" d="M24.500 7.500l4 4m0-4l-4 4"/>
    </g>
  </svg>

  <div class="zoom">
    <button type="button" aria-label="Zoom avant">+</button>
    <button type="button" aria-label="Zoom arrière">−</button>
  </div>
  <button class="layers" type="button" aria-label="Couches">
    <svg viewBox="0 0 26 26" width="26" height="26" aria-hidden="true"><path fill="#747474" d="M0 18L13 26L26 18L23 16L13 22L3 16z"/><path fill="#8a8a8a" d="M0 13.500L13 21L26 13.500L23 11.500L13 17.500L3 11.500z"/><path fill="#bdbdbd" d="M13 1L26 9L13 17L0 9z"/></svg>
  </button>
  <div class="logo">
    <svg viewBox="0 0 250 84" role="img" aria-label="Conservatoire d'espaces naturels Nouvelle-Aquitaine">
      <path fill="#78b41e" d="M10 9Q28 6 45 9Q49 11 47 20Q46 36 37 45Q27 53 16 46Q8 39 7 18Q6 11 10 9z"/>
      <path fill="#fff" d="M19 20Q22 16 24 22Q30 20 29 26Q33 31 27 33Q27 39 22 35Q17 38 17 32Q10 32 14 27Q9 22 15 22Q16 17 19 20zM37 18Q30 12 30 18Q32 21 36 21L35 27L39 24L43 27V21Q47 18 44 15Q40 12 38 17zM19 41L22 39L23 44L20 48z"/>
      <path fill="none" stroke="#fff" d="M21 34Q20 42 25 49"/>
      <path fill="#e07010" d="M6 47Q12 56 21 58Q17 62 7 61Q4 58 6 47z"/>
      <path fill="#08388c" d="M47 30Q52 38 51 50Q50 60 45 62Q36 64 28 60Q42 56 45 47Q48 40 47 30z"/>
      <g class="logo-name"><text x="57" y="34">Conservatoire</text><text x="57" y="55">d'espaces naturels</text></g>
      <text class="logo-region" x="57" y="77">Nouvelle-Aquitaine</text>
    </svg>
  </div>
  <div class="attribution">
    <svg viewBox="0 0 12 8" width="12" height="8" aria-hidden="true"><path fill="#4c7be1" d="M0 0h12v4H0z"/><path fill="#ffd500" d="M0 4h12v3H0z"/><path fill="#e0bc00" d="M0 7h12v1H0z"/></svg>
    <a href="#">Leaflet</a> | © <a href="#">OpenStreetMap contributors</a>
  </div>
</main>

<div class="backdrop">
  <section class="modal" role="dialog" aria-modal="true" aria-labelledby="dialog-title">
    <header class="modal-header">
      <h1 id="dialog-title">Formulaire d'ajout de données</h1>
      <button class="close" type="button" aria-label="Fermer la fenêtre"><svg viewBox="0 0 16 16" width="16" height="16" aria-hidden="true"><path d="M1 1l14 14M15 1L1 15" stroke="currentColor" stroke-width="2" stroke-linecap="round"/></svg></button>
    </header>
    <form class="modal-body" id="contract">
      <div class="tabs" role="tablist">
        <button type="button" role="tab" class="tab">Informations générales</button>
        <button type="button" role="tab" class="tab">Exploitation</button>
        <button type="button" role="tab" class="tab selected" aria-selected="true">Partenariat CEN</button>
      </div>
      <h2>Contrat #1</h2>
      <div class="columns">
        <div class="column">
          <div class="field-row"><label for="type">Type de contrat</label>
            <select id="type" class="control"><option>AOT</option></select></div>
          <div class="field-row"><label for="signature">Date de signature</label>
            <div class="control group date"><input id="signature" type="text" placeholder="jj / mm / aaaa"><button type="button" aria-label="Choisir une date"><svg class="cal" viewBox="0 0 16 16" aria-hidden="true"><path d="M3 0h2v1.500h6V0h2v1.500h1Q16 1.500 16 3.500V14Q16 16 14 16H2Q0 16 0 14V3.500Q0 1.500 2 1.500h1zM1.500 5.500V13.500Q1.500 14.500 2.500 14.500h11Q14.500 14.500 14.500 13.500v-8z" fill="currentColor" fill-rule="evenodd"/></svg></button></div></div>
          <div class="field-row"><label for="effet">Date de prise d'effet</label>
            <div class="control group date"><input id="effet" type="text" placeholder="jj / mm / aaaa"><button type="button" aria-label="Choisir une date"><svg class="cal" viewBox="0 0 16 16" aria-hidden="true"><path d="M3 0h2v1.500h6V0h2v1.500h1Q16 1.500 16 3.500V14Q16 16 14 16H2Q0 16 0 14V3.500Q0 1.500 2 1.500h1zM1.500 5.500V13.500Q1.500 14.500 2.500 14.500h11Q14.500 14.500 14.500 13.500v-8z" fill="currentColor" fill-rule="evenodd"/></svg></button></div></div>
          <div class="field-row"><label for="fin">Date de fin</label>
            <div class="control group date"><input id="fin" type="text" placeholder="jj / mm / aaaa"><button type="button" aria-label="Choisir une date"><svg class="cal" viewBox="0 0 16 16" aria-hidden="true"><path d="M3 0h2v1.500h6V0h2v1.500h1Q16 1.500 16 3.500V14Q16 16 14 16H2Q0 16 0 14V3.500Q0 1.500 2 1.500h1zM1.500 5.500V13.500Q1.500 14.500 2.500 14.500h11Q14.500 14.500 14.500 13.500v-8z" fill="currentColor" fill-rule="evenodd"/></svg></button></div></div>
          <div class="field-row"><label for="produits">Produits finis</label>
            <div class="multi"><input id="produits" type="text" placeholder="Ajouter des produits finis"></div></div>
        </div>
        <div class="column">
          <div class="field-row search"><label for="referent">Rechercher un(e) référent(e)</label>
            <input id="referent" class="control" type="text" placeholder="Rechercher un(e) référent(e) existant(e)..."></div>
          <div class="field-row"><label for="nom">Nom de la personne référente</label>
            <input id="nom" class="control" type="text"></div>
          <div class="field-row"><label for="prenom">Prénom de la personne référente</label>
            <input id="prenom" class="control" type="text"></div>
          <div class="field-row"><label for="surface">Surface contractualisée (ha)</label>
            <div class="control group"><input id="surface" type="number"><span class="spinner"><button type="button" aria-label="Augmenter"><svg viewBox="0 0 8 5" width="8" height="5" aria-hidden="true"><path d="M1 4l3-3 3 3"/></svg></button><button type="button" aria-label="Diminuer"><svg viewBox="0 0 8 5" width="8" height="5" aria-hidden="true"><path d="M1 1l3 3 3-3"/></svg></button></span></div></div>
          <div class="field-row"><label for="milieux">Types de milieu</label>
            <div class="multi"><input id="milieux" type="text" placeholder="Ajouter des types de milieu"></div></div>
        </div>
      </div>
      <hr>
    </form>
    <footer class="modal-footer">
      <button class="btn save" type="submit" form="contract">Enregistrer les données</button>
      <button class="btn reset" type="reset" form="contract">Réinitialiser le formulaire</button>
      <button class="btn cancel" type="button">Fermer</button>
    </footer>
  </section>
</div>
</body>
</html>
```

FILE: styles.css
```css
* { box-sizing: border-box; }

body {
  margin: 0;
  height: 100vh;
  display: flex;
  flex-direction: column;
  overflow: hidden;
  font: 15px/24px "Open Sans", "Noto Sans", sans-serif;
  color: #212529;
}

button, input, select { font: inherit; color: inherit; }
button { cursor: pointer; }

/* Navigation */
.navbar {
  position: relative;
  z-index: 3;
  display: flex;
  align-items: center;
  gap: 16px;
  height: 50px;
  padding: 0 4px 4px 14px;
  background: #212529;
}
.brand { color: #fff; font-size: 19px; text-decoration: none; margin-right: 12px; }
.nav-link { display: flex; align-items: center; gap: 4px; color: #9b9d9e; text-decoration: none; white-space: nowrap; }
.nav-link.active { color: #fff; }
.icon { width: 17px; height: 17px; }
.spacer { flex: 1; }
.caret { margin-left: 4px; border: 4px solid transparent; border-top-color: currentColor; border-bottom: 0; }

/* Map */
.map { position: relative; flex: 1; min-height: 0; background: #f2efe9; }
.tiles { display: block; width: 100%; height: 100%; }
.tiles path { fill: none; stroke-linejoin: round; }
.tiles .land { fill: #f2efe9; }
.tiles .field { fill: #f2efe9; }
.tiles .wood { fill: #add19e; }
.tiles .grass { fill: #cdebb0; }
.tiles .town { fill: #e0dfdf; }
.tiles .farm { fill: #eef0d5; }
.tiles .indus { fill: #c4c2c4; }
.tiles .indus-z { fill: #ebdbe8; }
.tiles .zone-red { fill: #e4bccb; }
.tiles .retail { fill: #ffd6d1; }
.tiles .sport { fill: #b5e3b5; }
.tiles .pitch { fill: #88e0be; }
.tiles .bldg { fill: #cbbfb3; }
.tiles .service { fill: #ecc5c8; }
.tiles .parcel { fill: #68a830; }
.tiles .water { fill: #aad3df; }
.river { stroke: #aad3df; stroke-width: 26; }
.river-n { stroke: #aad3df; stroke-width: 12; }
.stream { stroke: #aad3df; stroke-width: 9; }
.stream-thin { stroke: #aad3df; stroke-width: 3; }
.stream-dash { stroke: #7fa8d0; stroke-width: 5; stroke-dasharray: 9 7; }
.track { stroke: #ac8331; stroke-width: 3; stroke-dasharray: 12 9; opacity: .6; }
.path-red { stroke: #e08070; stroke-width: 4; stroke-dasharray: 4 8; }
.boundary { stroke: #a08aa5; stroke-width: 5; stroke-dasharray: 16 6 4 6; }
.rail-dash { stroke: #8f9d8c; stroke-width: 5; stroke-dasharray: 16 6 4 6; }
.power { stroke: #888; stroke-width: 3; }
g:not([transform]) > .power { stroke-width: 1; }
.pylon { fill: #ccc; stroke: #555; stroke-width: 3; }
.casing { stroke: #b9b9b9; stroke-width: 12; }
.street { stroke: #fff; stroke-width: 7; }
.casing2 { stroke: #b9b9b9; stroke-width: 20; }
.street2 { stroke: #fff; stroke-width: 14; }
.sec-case { stroke: #a5ab5a; stroke-width: 20; }
.sec { stroke: #f7fabf; stroke-width: 15; }
.pri-case { stroke: #b08040; stroke-width: 20; }
.pri { stroke: #fcd6a4; stroke-width: 15; }
.mot-case { stroke: #c0506e; stroke-width: 28; }
.mot { stroke: #e892a2; stroke-width: 22; }
.ramp { stroke: #dc8095; stroke-width: 12; }
.rail { stroke: #666; stroke-width: 9; }
.rail-in { stroke: #e6e6e6; stroke-width: 3; stroke-dasharray: 24 24; }
.tunnel { stroke-dasharray: 18 9; }
.casing2.s { stroke-width: 5; }
.street2.s, .sec.s, .pri.s { stroke-width: 4; }
.mot.s { stroke-width: 7; }
.river.s { stroke-width: 8; }
.rail.s { stroke-width: 3; }
.trees { fill: none; stroke: #8cb27e; stroke-width: 3; }
.shield { fill: #f2f2f0; stroke: #aaa; stroke-width: 3; }
.shield.s { stroke-width: 1; }
.sec-sh { fill: #f7fabf; stroke: #a5ab5a; }
.mot-sh { fill: #f3c0ca; stroke: #d06080; }
.tiles text { font-family: "Noto Sans", sans-serif; font-size: 30px; fill: #333; }
.tiles .sh-mot { fill: #5a1030; }
.label { paint-order: stroke; stroke: #fff; stroke-opacity: .6; stroke-width: 8; }
.tiles .road-l text { font-size: 28px; fill: #111; }
.tiles .place text, .tiles text.place { font-size: 30px; }
.tiles .town-l { font-size: 36px; fill: #777; }
.tiles .grey-l { font-size: 28px; fill: #777; }
.tiles .river-l { fill: #4d80b3; }
.tiles .purple { font-size: 28px; fill: #8d618b; }
.tiles .red text { font-size: 28px; fill: #80202c; font-style: italic; }
.tiles .zone-l text { font-size: 28px; fill: #633050; font-style: italic; }
.tiles .small, .tiles .small text { font-size: 10px; paint-order: stroke; stroke: #fff; stroke-opacity: .6; stroke-width: 2px; }
.tiles .small.red { fill: #80202c; font-style: italic; }
.tiles .small.violet { fill: #8d618b; }
.tiles .coat { fill: #e84c00; }
.tiles .coat-shade { fill: #d82800; }
.tiles .hair { fill: #ff4600; }
.tiles .face { fill: #e8b09a; }
.tiles .badge { fill: #e80000; }
.tiles .cross { stroke: #fff; stroke-width: 1.2; }

.zoom {
  position: absolute;
  top: 10px;
  left: 15px;
  display: grid;
  border: 2px solid #b0afa8;
  border-radius: 4px;
  overflow: hidden;
}
.zoom button { width: 30px; height: 30px; padding: 0; border: 0; background: #fff; color: #000; font: bold 22px/30px "DejaVu Sans", sans-serif; }
.zoom button + button { border-top: 1px solid #ccc; height: 31px; }
.layers {
  position: absolute;
  top: 10px;
  right: 3px;
  width: 48px;
  height: 48px;
  padding: 0;
  display: grid;
  place-items: center;
  border: 2px solid #bdb3b0;
  border-radius: 5px;
  background: #fff;
}
.logo { position: absolute; left: 15px; bottom: 10px; width: 250px; height: 84px; background: #fff; }
.logo svg { display: block; }
.logo-name text { font: 19px "Open Sans", sans-serif; fill: #142882; }
.logo-region { font: bold 19px "Open Sans", sans-serif; fill: #5ca014; }
.attribution {
  position: absolute;
  right: -8px;
  bottom: 10px;
  padding: 0 5px;
  background: rgba(255, 255, 255, .8);
  font: 12px/17px "Liberation Sans", Arial, sans-serif;
  color: #333;
  white-space: nowrap;
}
.attribution a { color: #0078a8; text-decoration: none; }

/* Dialog */
.backdrop {
  position: fixed;
  inset: 0;
  z-index: 2;
  padding: 77px 2px 0 0;
  background: rgba(0, 0, 0, .5);
  overflow: hidden;
}
.modal {
  max-width: 1140px;
  margin: 0 auto;
  border: 1px solid rgba(0, 0, 0, .18);
  border-radius: 12px;
  background: #fff;
  background-clip: padding-box;
  box-shadow: 0 8px 16px rgba(0, 0, 0, .3);
  overflow: hidden;
}
.modal-header {
  display: flex;
  align-items: center;
  justify-content: space-between;
  height: 70px;
  padding: 0 16px;
  background: #174193;
  border-bottom: 2px solid #303f9f;
}
h1 { margin: 0; font-size: 23px; line-height: 36px; font-weight: 700; color: #fff; }
.close { display: grid; padding: 0; border: 0; background: none; color: #0b2049; }
.modal-body { padding: 24px 24px 48px; }
.tabs { display: flex; border-bottom: 1px solid #dee2e6; }
.tab {
  height: 42px;
  margin-bottom: -1px;
  padding: 1px 16px 0;
  border: 1px solid transparent;
  border-radius: 6px 6px 0 0;
  background: none;
  color: #0d6efd;
}
.tab.selected { color: #000; background: #fff; border-color: #dee2e6 #dee2e6 #fff; }
h2 { margin: 26px 0 14px; font-size: 19px; line-height: 24px; font-weight: 400; }
.columns { display: grid; grid-template-columns: 1fr 1fr; gap: 24px; }
.column { display: flex; flex-direction: column; gap: 16px; }
.field-row { display: flex; flex-direction: column; }
label { padding-top: 2px; line-height: 22px; }
.search { gap: 8px; }
.control {
  width: 100%;
  height: 38px;
  padding: 2px 12px 0;
  border: 1px solid #dee2e6;
  border-radius: 6px;
  background: #fff;
  appearance: none;
}
.control::placeholder { color: #5f6569; opacity: 1; }
.group { display: flex; align-items: center; padding-top: 0; }
.group input { flex: 1; min-width: 0; padding: 2px 0 0; border: 0; outline: 0; background: none; appearance: textfield; }
.group input::-webkit-inner-spin-button { display: none; }
.date { padding: 0 17px 0 14px; }
.date input::placeholder { color: #212529; opacity: 1; }
.date button { display: grid; padding: 0 0 2px; border: 0; background: none; color: #6c6f73; }
.cal { width: 16px; height: 16px; }
.spinner { display: grid; width: 18px; height: 18px; background: #e9e9ed; }
.spinner button { display: grid; place-items: center; height: 9px; padding: 0; border: 0; background: none; }
.spinner path { fill: none; stroke: #8f8f9d; stroke-width: 2; }
.multi { padding: 5px; border: 1px solid #dee2e6; border-radius: 6px; }
.multi input {
  display: block;
  width: 100%;
  height: 39px;
  padding: 0 16px 4px;
  border: 1px solid #d1d1db;
  border-radius: 8px;
  box-shadow: 0 0 6px rgba(0, 0, 0, .12);
}
.multi input::placeholder { color: #999; opacity: 1; }
hr { margin: 32px 0 0; border: 0; border-top: 1px solid #dee2e6; }
.modal-footer {
  display: flex;
  align-items: center;
  justify-content: flex-end;
  gap: 8px;
  padding: 16px;
  border-top: 1px solid #dee2e6;
}
.btn { height: 42px; padding: 1px 23px 0; border: 1px solid transparent; border-radius: 8px; }
.save { height: 40px; background: #174193; color: #fff; }
.reset { background: #ffc107; color: #000; }
.cancel { background: #f8f9fa; border-color: #ccc; }
```
